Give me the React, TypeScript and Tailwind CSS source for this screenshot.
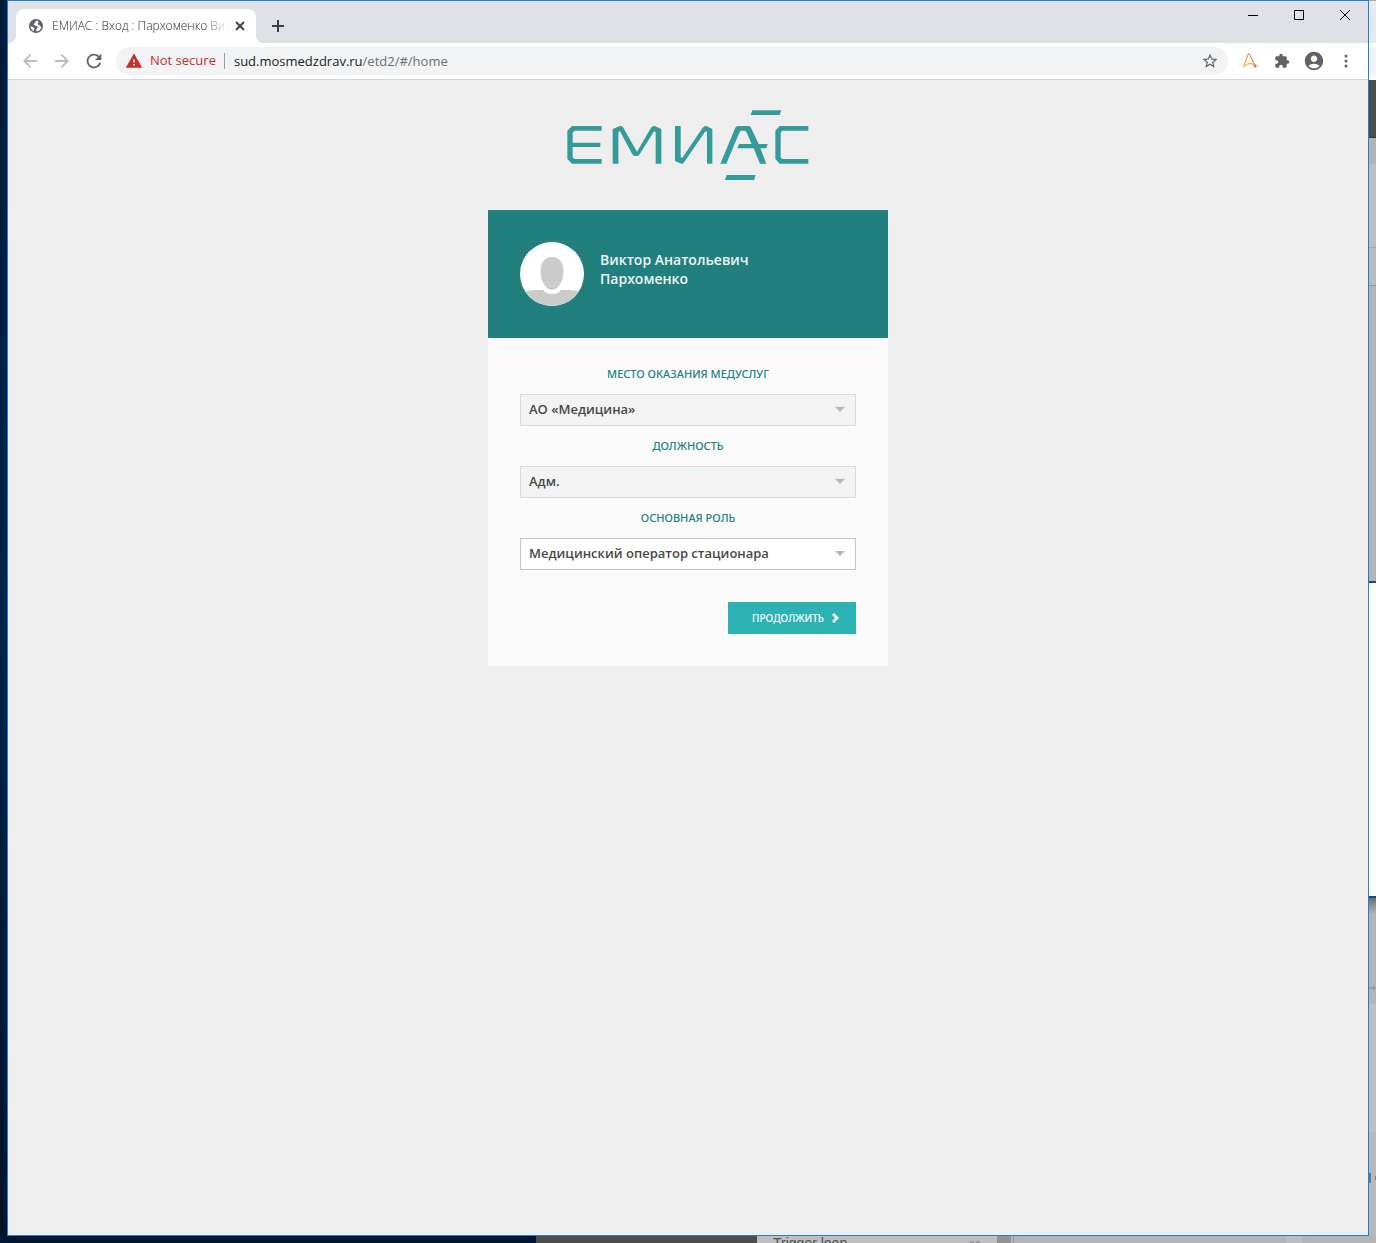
import React from "react";
import {
  MdAccountCircle,
  MdExtension,
  MdRefresh,
  MdStarBorder,
  MdWarning,
} from "react-icons/md";

function Globe() {
  return (
    <svg viewBox="0 0 14 14" className="mx-px size-[14px] shrink-0">
      <circle cx="7" cy="7" r="7" fill="#5f6368" />
      <path d="M8.300 1.600Q6 2 6.300 3.600L4.600 5.300Q5.500 7 8 7Q9.300 7.500 8.300 9Q7 9.500 7.300 12.300Q11 12.500 12.400 8.200Q11 7.500 10.500 6Q8.500 6 8.800 4.500Q10.500 3.500 8.300 1.600z" fill="#fff" />
      <path d="M1.500 7.200L5 8.600Q6 9.500 5 10.300V12Q1.800 11 1.500 7.200z" fill="#fff" />
    </svg>
  );
}

function TabStrip() {
  return (
    <div className="flex h-[42px] items-start bg-[#dee1e6] pl-2">
      <div className="relative mt-2 flex h-[34px] w-60 items-center rounded-t-lg bg-white pl-3 pr-2">
        <span className="absolute -left-2 bottom-0 size-2 bg-[radial-gradient(circle_at_0_0,transparent_8px,#fff_8px)]" />
        <span className="absolute -right-2 bottom-0 size-2 bg-[radial-gradient(circle_at_100%_0,transparent_8px,#fff_8px)]" />
        <Globe />
        <span className="ml-2 w-44 overflow-hidden whitespace-nowrap text-[12px] font-light leading-4 text-[#25282b] [mask-image:linear-gradient(to_right,#000_86%,transparent)]">
          ЕМИАС : Вход : Пархоменко Виктор
        </span>
        <button aria-label="Close tab" className="ml-1 flex size-4 items-center justify-center">
          <svg viewBox="0 0 10 10" className="size-[10px]" stroke="#3c4043" strokeWidth="1.8">
            <path d="M1 1l8 8M9 1l-8 8" />
          </svg>
        </button>
      </div>
      <button aria-label="New tab" className="ml-2 mt-[11px] flex size-7 items-center justify-center">
        <svg viewBox="0 0 12 12" className="size-3" fill="#3c4043">
          <path d="M5 0h2v5h5v2H7v5H5V7H0V5h5z" />
        </svg>
      </button>
      <div className="ml-auto flex h-7">
        <button aria-label="Minimize" className="flex w-[46px] items-center justify-center">
          <svg viewBox="0 0 11 11" className="size-[11px]" fill="#000">
            <path d="M0 5h10v1H0z" />
          </svg>
        </button>
        <button aria-label="Maximize" className="flex w-[46px] items-center justify-center">
          <svg viewBox="0 0 11 11" className="size-[11px]" fill="none" stroke="#000">
            <path d="M.5 .5h9v9h-9z" />
          </svg>
        </button>
        <button aria-label="Close" className="flex w-[46px] items-center justify-center">
          <svg viewBox="0 0 11 11" className="size-[11px]" stroke="#000">
            <path d="M0 0l10 10M10 0L0 10" />
          </svg>
        </button>
      </div>
    </div>
  );
}

function ToolButton({ label, children }: { label: string; children: React.ReactNode }) {
  return (
    <button aria-label={label} className="flex size-7 shrink-0 items-center justify-center text-[#5f6368]">
      {children}
    </button>
  );
}

function Toolbar() {
  return (
    <div className="flex h-[37px] items-center gap-2 border-b border-[#d6d7d9] bg-white px-2">
      <div className="flex gap-1">
        <ToolButton label="Back">
          <svg viewBox="0 0 14 14" className="size-[14px]" fill="none" stroke="#babcbe" strokeWidth="1.8">
            <path d="M14 7H1.500M7.500 .7L1.300 7l6.200 6.300" />
          </svg>
        </ToolButton>
        <ToolButton label="Forward">
          <svg viewBox="0 0 14 14" className="size-[14px]" fill="none" stroke="#babcbe" strokeWidth="1.8">
            <path d="M0 7h12.500M6.500 .7L12.700 7l-6.200 6.300" />
          </svg>
        </ToolButton>
        <ToolButton label="Reload">
          <MdRefresh className="size-[22px]" />
        </ToolButton>
      </div>
      <div className="flex h-7 min-w-0 flex-1 items-center rounded-full bg-[#f1f3f4] px-[9px] text-[13px]">
        <MdWarning className="size-[18px] shrink-0 text-[#c5302a]" />
        <span className="ml-[7px] whitespace-nowrap text-[#c5302a]">Not secure</span>
        <span className="ml-2 h-4 w-px bg-[#9aa0a6]" />
        <div className="relative ml-[9px] h-7 min-w-0 flex-1">
          <input
            aria-label="Address"
            readOnly
            value="sud.mosmedzdrav.ru/etd2/#/home"
            className="h-full w-full bg-transparent text-transparent outline-none"
          />
          <span aria-hidden="true" className="pointer-events-none absolute inset-0 leading-7 text-[#6b6f74]">
            <span className="text-[#202124]">sud.mosmedzdrav.ru</span>/etd2/#/home
          </span>
        </div>
        <button aria-label="Bookmark this page" className="text-[#5f6368]">
          <MdStarBorder className="size-[18px]" />
        </button>
      </div>
      <div className="flex gap-1">
        <ToolButton label="Extension">
          <svg viewBox="0 0 16 16" className="size-4" fill="none" strokeLinecap="round" strokeLinejoin="round">
            <defs>
              <linearGradient id="spark" x1="0" y1="1" x2="1" y2="0">
                <stop offset="0" stopColor="#fbc531" />
                <stop offset="1" stopColor="#f06a45" />
              </linearGradient>
            </defs>
            <path d="M1.500 14L5.800 2Q6.800 -.2 7.900 2L12.800 12Q10 9.800 5.500 11Q3.500 11.500 1.500 14" stroke="url(#spark)" strokeWidth="1.100" />
            <circle cx="13.200" cy="13" r="1.600" fill="#ef6a4c" />
          </svg>
        </ToolButton>
        <ToolButton label="Extensions">
          <MdExtension className="size-4" />
        </ToolButton>
        <ToolButton label="Profile">
          <MdAccountCircle className="size-[22px]" />
        </ToolButton>
        <ToolButton label="Menu">
          <svg viewBox="0 0 4 14" className="h-[14px] w-1" fill="#5f6368">
            <circle cx="2" cy="2" r="1.500" />
            <circle cx="2" cy="7" r="1.500" />
            <circle cx="2" cy="12" r="1.500" />
          </svg>
        </ToolButton>
      </div>
    </div>
  );
}

function Logo() {
  return (
    <svg role="img" aria-label="ЕМИАС" viewBox="48 27 732 216" className="h-[72px] w-[244px]" fill="#349b9a">
      <path d="M155 78H66L52 92v85l14 14h89v-14H73l-5-6v-30h83v-13H68V98l5-6h82z" />
      <path d="M188 191V87l24-10 7 5 42 73 43-73 8-5 22 10v104h-17V96l-5-2-43 69q-3 5-8 5h-6q-5 0-8-5L210 94l-5 2v95z" />
      <path d="M375 78h17v94l5 1 61-90 9-6 20 10v104h-16V96l-5-2-63 92-7 6-21-9z" />
      <path d="M511 191l45-108q2-5 8-5h31q6 0 8 5l23 49h27l-4 13h-18l18 46h-19l-19-46h-49l5-13h38l-16-36q-2-4-6-4h-8q-4 0-6 4l-40 95z" />
      <path d="M775 78H689l-13 14v85l13 14h86v-14h-79l-4-6V98l4-6h79z" />
      <path d="M607 31h87l-5 14h-87zM530 225h87l-5 15h-87z" />
    </svg>
  );
}

function Avatar() {
  return (
    <svg viewBox="0 0 64 64" className="size-16 shrink-0 rounded-full bg-white" fill="#cbcbcb" aria-hidden="true">
      <path d="M32 15c7 0 11.500 5.500 11.500 14.500C43.500 39 38 48 32 48s-11.500-9-11.500-18.500C20.500 20.500 25 15 32 15z" />
      <path d="M0 64V54q4-6 14-6h9q3 4 9 4t9-4h9q10 0 14 6v10z" />
    </svg>
  );
}

function Field({ id, label, value, disabled }: { id: string; label: string; value: string; disabled?: boolean }) {
  return (
    <div className="flex flex-col gap-2">
      <label htmlFor={id} className="text-center text-[11px] font-medium uppercase leading-6 text-[#21807e]">
        {label}
      </label>
      <div className="relative">
        <select
          id={id}
          disabled={disabled}
          className="h-8 w-full appearance-none border border-[#c6c6c6] bg-white pl-2 pr-8 font-['Open_Sans',sans-serif] text-[13px] font-semibold text-[#484848] opacity-100 disabled:border-[#dadada] disabled:bg-[#f3f3f3]"
        >
          <option>{value}</option>
        </select>
        <svg viewBox="0 0 10 5" className="pointer-events-none absolute right-[11px] top-[13px] h-[5px] w-[10px]" fill="#b9b9b9">
          <path d="M0 0h10L5 5z" />
        </svg>
      </div>
    </div>
  );
}

function LoginCard() {
  return (
    <main className="mt-[29px] w-[400px] bg-[#fafafa]">
      <header className="flex items-start gap-4 bg-[#21807e] p-8">
        <Avatar />
        <h1 className="mt-2 font-['Open_Sans',sans-serif] text-[14px] font-semibold leading-[19px] text-[#eef5f5]">
          Виктор Анатольевич
          <br />
          Пархоменко
        </h1>
      </header>
      <form className="flex flex-col gap-2 px-8 pb-8 pt-6" onSubmit={(e) => e.preventDefault()}>
        <Field id="place" label="Место оказания медуслуг" value="АО «Медицина»" disabled />
        <Field id="position" label="Должность" value="Адм." disabled />
        <Field id="role" label="Основная роль" value="Медицинский оператор стационара" />
        <button
          type="submit"
          className="mt-6 flex h-8 w-32 items-center justify-end gap-2 self-end bg-[#2db2b4] pr-[17px] text-[10px] font-medium uppercase text-white"
        >
          Продолжить
          <svg viewBox="0 0 7 10" className="h-[10px] w-[7px]" fill="none" stroke="#fff" strokeWidth="2.600">
            <path d="M1 1l4.200 4L1 9" />
          </svg>
        </button>
      </form>
    </main>
  );
}

function RightBackdrop() {
  return (
    <div className="flex w-[7px] shrink-0 flex-col overflow-hidden bg-[#b7b8ba]">
      <div className="h-px shrink-0 bg-[#a5a6a8]" />
      <div className="h-[42px] shrink-0 bg-[#e7eaed]" />
      <div className="h-[37px] shrink-0 border-y-4 border-white bg-[#f1f3f4]" />
      <div className="h-[58px] shrink-0 border-b border-[#363636] bg-[#4d4c4a]" />
      <div className="h-[26px] shrink-0 bg-[#b3b3b3]" />
      <div className="h-[84px] shrink-0 border-b border-[#a6a6a6] bg-[#bebebe]" />
      <div className="h-[38px] shrink-0 border-b border-[#8b9aa6] bg-[#b9babb]" />
      <div className="h-[295px] shrink-0 bg-[#b3b4b6]" />
      <div className="h-[317px] shrink-0 border-y-2 border-[#1f4a7c] bg-white" />
      <div className="flex h-[106px] shrink-0 flex-col justify-end bg-linear-to-b from-[#6f7072] via-[#b3b4b6] via-15% to-[#b3b4b6] pb-[13px]">
        <svg viewBox="0 0 7 6" className="h-[6px] w-[7px]" fill="#9b9b9b">
          <path d="M0 2h4V0l3 3-3 3V4H0z" />
        </svg>
      </div>
      <div className="h-[128px] shrink-0 bg-[#bfbfbf]" />
      <div className="mt-[41px] flex h-[10px] shrink-0 justify-between">
        <span className="w-[2px] bg-[#567f9f]" />
        <span className="my-[3px] w-px bg-[#a87948]" />
      </div>
    </div>
  );
}

function BottomBackdrop() {
  return (
    <div className="flex h-[7px] shrink-0 overflow-hidden bg-[#b3b4b6]">
      <div className="w-[536px] shrink-0 bg-[#001630]" />
      <div className="w-[221px] shrink-0 bg-[#4c4c4c]" />
      <div className="flex w-60 shrink-0 items-start justify-between bg-[#bfbfbf] pl-4 pr-4">
        <span className="font-['Liberation_Sans'] text-[14px] leading-[14px] text-[#505050]">Trigger loop</span>
        <svg viewBox="0 0 12 6" className="mt-1 h-[6px] w-3" fill="none" stroke="#8d9298" strokeWidth="1.500">
          <path d="M1 1l2 2 2-2M7 1l2 2 2-2" />
        </svg>
      </div>
      <div className="w-[14px] shrink-0 bg-[#929292]" />
      <div className="ml-[2px] w-px shrink-0 bg-[#8b9aa6]" />
      <div className="ml-auto mr-[74px] w-4 bg-[#bdbebf]" />
    </div>
  );
}

export default function App() {
  return (
    <div className="flex min-h-screen flex-col overflow-hidden font-['Noto_Sans',sans-serif]">
      <div className="flex flex-1">
        <div className="w-[7px] shrink-0 bg-linear-to-b from-[#001a38] via-[#002349] to-[#00132a]" />
        <div className="flex min-w-0 flex-1 flex-col border border-[#1883d7] bg-[#eee]">
          <div className="font-['Open_Sans',sans-serif]">
            <TabStrip />
            <Toolbar />
          </div>
          <div className="flex flex-1 flex-col items-center pb-8 pt-[29px]">
            <Logo />
            <LoginCard />
          </div>
        </div>
        <RightBackdrop />
      </div>
      <BottomBackdrop />
    </div>
  );
}
